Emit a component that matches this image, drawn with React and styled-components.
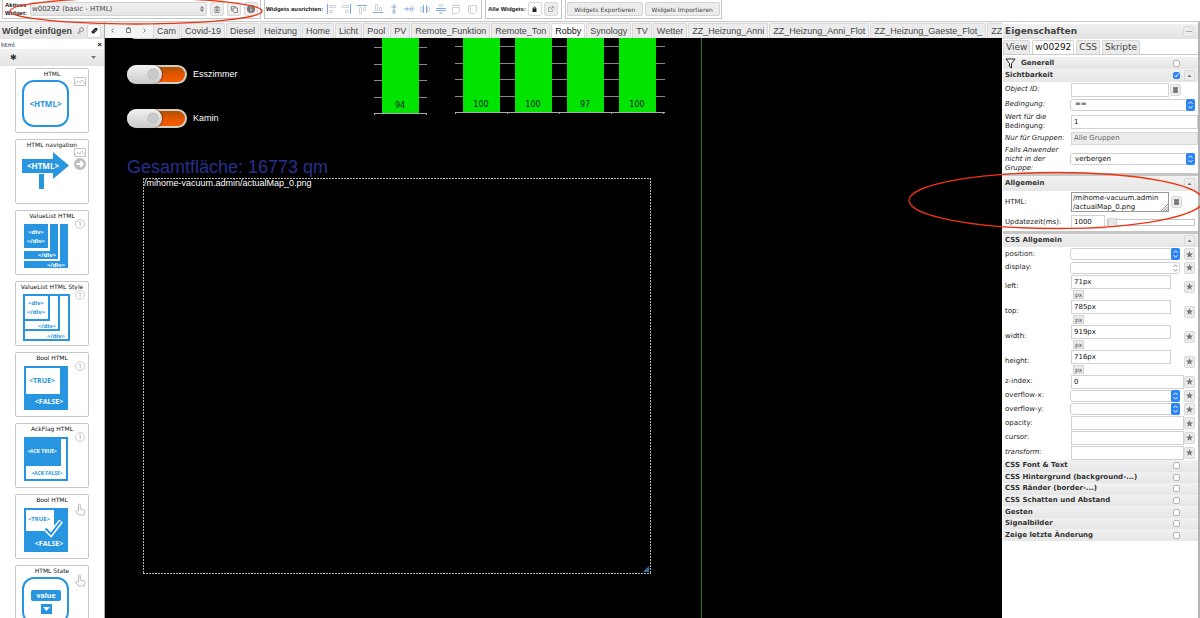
import React from "react";
import styled, { createGlobalStyle, css } from "styled-components";

const Global = createGlobalStyle`
  * { box-sizing: border-box; }
  html, body, #root { height: 100%; }
  body { margin: 0; overflow: hidden; background: #fff; color: #222; font: 7px/9px ${"\"DejaVu Sans\", Verdana, sans-serif"}; }
  button, input, select, textarea { font: inherit; color: inherit; margin: 0; padding: 0; border-radius: 0; }
  h1, h2 { margin: 0; }
`;

const arial = '"Liberation Sans", Arial, sans-serif';
const blue = "#2795e0";

const Shell = styled.div`
  display: grid;
  grid-template-rows: 22px minmax(0, 1fr);
  height: 100vh;
  position: relative;
  overflow: hidden;
`;

/* ---------- top toolbar ---------- */
const Toolbar = styled.header`
  display: flex;
  gap: 3px;
  padding: 0 0 2px 2px;
  background: #fff;
  border-bottom: 1px solid #c9c9c9;
`;
const Group = styled.div`
  display: flex;
  align-items: center;
  border: 1px solid #c4c4c4;
  border-top: 0;
  padding: 0 ${(p) => p.$px || "2px"};
  width: ${(p) => p.$w};
  gap: ${(p) => p.$gap || "0"};
  white-space: nowrap;
`;
const GroupLabel = styled.label`
  font: bold 6px/8px ${arial};
  color: #111;
`;
const ActiveSelect = styled.div`
  position: relative;
  flex: 1;
  height: 14px;
  select {
    appearance: none;
    width: 100%;
    height: 14px;
    padding: 0 1px;
    border: 1px solid #d3d3d3;
    border-radius: 2px;
    background: linear-gradient(#f0f0f0, #e4e4e4);
    color: #444;
  }
  svg { position: absolute; right: 3px; top: 4px; pointer-events: none; }
`;
const IconButton = styled.button`
  display: inline-flex;
  align-items: center;
  justify-content: center;
  flex: none;
  width: ${(p) => p.$w || "14px"};
  height: ${(p) => p.$h || "14px"};
  border: 1px solid ${(p) => (p.$plain ? "transparent" : "#d9d9d9")};
  border-radius: 2px;
  background: ${(p) => (p.$plain ? "transparent" : p.$white ? "#fff" : "#ececec")};
  color: ${(p) => p.$color || "#777"};
`;
const AlignIcons = styled.div`
  display: flex;
  flex: 1;
  justify-content: space-around;
`;
const TextButton = styled.button`
  height: 14px;
  flex: 1;
  border: 1px solid #d3d3d3;
  border-radius: 2px;
  background: #ececec;
  color: #444;
  font-size: 6px;
`;

/* ---------- body ---------- */
const Body = styled.div`
  display: grid;
  grid-template-columns: 105px minmax(0, 1fr) 198px;
  min-height: 0;
`;

/* ---------- left palette ---------- */
const Palette = styled.aside`
  display: flex;
  flex-direction: column;
  min-height: 0;
  overflow: hidden;
  border-right: 1px solid #aaa;
  background: #fff;
`;
const PaletteHead = styled.div`
  display: flex;
  align-items: center;
  flex: none;
  height: 17px;
  padding: 0 3px 0 2px;
  background: linear-gradient(#f1f1f1, #e4e4e4);
  h2 { flex: 1; font: bold 9px/16px ${arial}; color: #444; white-space: nowrap; }
`;
const SearchRow = styled.div`
  display: flex;
  flex: none;
  height: 10px;
  padding: 0 1px;
  input { flex: 1; min-width: 0; height: 10px; border: 0; outline: 0; font-size: 6px; color: #115; background: transparent; }
  button { border: 0; background: none; font: bold 8px/9px ${arial}; color: #111; padding: 0 1px; }
`;
const SetSelect = styled.div`
  position: relative;
  flex: none;
  height: 18px;
  select {
    appearance: none;
    width: 100%;
    height: 17px;
    padding-left: 10px;
    border: 0;
    background: linear-gradient(#f1f1f1, #e4e4e4);
    font-size: 8px;
    color: #333;
  }
  svg { position: absolute; right: 8px; top: 7px; pointer-events: none; }
`;
const Cards = styled.div`
  display: flex;
  flex-direction: column;
  gap: 6px;
  padding: 1px 15px 0;
`;
const Card = styled.div`
  position: relative;
  flex: none;
  height: 65px;
  padding: 0 6px;
  border: 1px solid #c8c8c8;
  border-radius: 2px;
  color: #111;
  font-size: 6px;
  line-height: 10px;
  text-align: center;
  white-space: nowrap;
  > svg { display: block; margin-top: 1px; }
`;
const Badge = styled.span`
  position: absolute;
  top: 8px;
  right: 2px;
  display: grid;
  gap: 1px;
`;
const CardTitle = styled.div`
  margin: 0 -6px;
`;

/* ---------- centre ---------- */
const Center = styled.main`
  display: flex;
  flex-direction: column;
  min-width: 0;
  min-height: 0;
`;
const ViewTabs = styled.nav`
  display: flex;
  flex: none;
  gap: 1px;
  height: 16px;
  padding: 1px 0 0;
  background: #f4f4f4;
  overflow: hidden;
`;
const ViewTab = styled.button`
  flex: none;
  height: 15px;
  padding: 0 3px;
  border: 1px solid #d9d9d9;
  border-bottom: 0;
  border-radius: 2px 2px 0 0;
  background: ${(p) => (p.$on ? "#fff" : "#ebebeb")};
  color: ${(p) => (p.$on ? "#111" : "#484848")};
  font: 9px/14px ${arial};
  white-space: nowrap;
`;
const TabTools = styled.div`
  display: flex;
  flex: none;
  justify-content: space-around;
  width: 47px;
`;
const Canvas = styled.div`
  position: relative;
  flex: 1;
  min-height: 0;
  background: #000;
  overflow: hidden;
  font-family: ${arial};
`;
const Placed = styled.div`
  position: absolute;
  left: ${(p) => p.$x}px;
  top: ${(p) => p.$y}px;
`;
const Switch = styled.label`
  display: flex;
  align-items: center;
  gap: 6px;
  color: #fff;
  font-size: 9px;
  line-height: 20px;
  input {
    appearance: none;
    width: 60px;
    height: 19px;
    border-radius: 10px;
    border: 2px solid #d2cec6;
    background: linear-gradient(#a85400, #e65500 50%, #f06000);
    position: relative;
  }
  input::before {
    content: "";
    position: absolute;
    left: -2px;
    top: -2px;
    width: 35px;
    height: 19px;
    border-radius: 10px;
    background:
      radial-gradient(circle at 26px 9px, #cbcbcb 0 4px, #bdbdbd 5px, transparent 6px),
      linear-gradient(#f2f2f2, #c9c9c9);
    box-shadow: 1px 0 1px #733;
  }
`;
const AreaText = styled(Placed)`
  color: #26308f;
  font-size: 18px;
  line-height: 20px;
  white-space: nowrap;
`;
const dashes = (dir) => `repeating-linear-gradient(${dir}, #b8b8b8 0 2px, transparent 2px 3px)`;
const MapWidget = styled(Placed)`
  width: 508px;
  height: 396px;
  padding: 1px;
  background:
    ${dashes("90deg")} top / 100% 1px no-repeat,
    ${dashes("90deg")} bottom / 100% 1px no-repeat,
    ${dashes("180deg")} left / 1px 100% no-repeat,
    ${dashes("180deg")} right / 1px 100% no-repeat;
  color: #fff;
  font-size: 9px;
  line-height: 9px;
  svg { position: absolute; right: 2px; bottom: 2px; }
`;
const Guide = styled(Placed)`
  width: 1px;
  height: 100%;
  background: #2a7a2a;
`;

/* ---------- right inspector ---------- */
const Inspector = styled.aside`
  display: flex;
  flex-direction: column;
  min-width: 0;
  overflow: hidden;
  padding: 2px 0 0 1px;
  border-right: 2px solid #b4b4b4;
  background: #fff;
`;
const PanelHead = styled.div`
  display: flex;
  align-items: center;
  justify-content: space-between;
  flex: none;
  height: 15px;
  padding: 0 4px 0 2px;
  background: linear-gradient(#f1f1f1, #e2e2e2);
  h1 { font-size: 9px; line-height: 15px; color: #444; }
`;
const PanelTabs = styled.nav`
  display: flex;
  flex: none;
  gap: 2px;
  height: 16px;
  padding: 1px 0 0;
  border-bottom: 1px solid #ccc;
`;
const PanelTab = styled.button`
  height: 14px;
  padding: 0 2px;
  border: 1px solid #d6d6d6;
  border-bottom: 0;
  border-radius: 2px 2px 0 0;
  background: ${(p) => (p.$on ? "#fff" : "#ebebeb")};
  color: ${(p) => (p.$on ? "#111" : "#444")};
  font-size: 9px;
  line-height: 13px;
`;
const Section = styled.div`
  display: flex;
  align-items: center;
  flex: none;
  height: ${(p) => p.$h || "12px"};
  margin-top: ${(p) => p.$mt || "0"};
  padding: 0 3px 0 2px;
  background: linear-gradient(#f1f1f1, #e6e6e6);
  ${(p) => p.$bar && css`border-top: 3px solid #c6c6c6;`}
  color: #333;
  h2, label { flex: 1; font-size: 7px; line-height: 11px; font-weight: bold; white-space: nowrap; }
  > svg { margin-right: 5px; }
`;
const ToggleSlot = styled.span`
  display: flex;
  width: 11px;
  margin-left: 4px;
`;
const Check = styled.input`
  appearance: none;
  width: 7px;
  height: 7px;
  border: 1px solid #b5b5b5;
  border-radius: 2px;
  background: #fff;
  &:checked { border-color: #2b83f6; background: #2b83f6; }
`;
const CheckWrap = styled.span`
  position: relative;
  display: inline-flex;
  svg { position: absolute; inset: 0; pointer-events: none; }
`;
const Row = styled.div`
  display: grid;
  grid-template-columns: 66px minmax(0, 1fr);
  align-items: center;
  flex: none;
  height: ${(p) => p.$h};
  padding-left: 2px;
  label { ${(p) => p.$i && "font-style: italic;"} }
`;
const Cell = styled.div`
  display: flex;
  align-items: center;
  gap: ${(p) => p.$gap || "2px"};
  padding-right: ${(p) => p.$pr || "3px"};
`;
const Field = styled.input`
  flex: ${(p) => (p.$w ? "none" : "1")};
  width: ${(p) => p.$w || "auto"};
  min-width: 0;
  height: 14px;
  padding: 0 2px;
  border: 1px solid #d2d2d2;
  border-radius: 0;
  outline: 0;
  background: #fff;
  color: #111;
`;
const GroupsButton = styled.button`
  flex: 1;
  height: 13px;
  padding: 0 2px;
  text-align: left;
  border: 1px solid #d8d8d8;
  background: #ececec;
  color: #666;
`;
const Html = styled.textarea`
  width: 98px;
  height: 20px;
  padding: 1px;
  border: 1px solid #999;
  outline: 0;
  resize: none;
  overflow: hidden;
  line-height: 9px;
  color: #111;
`;
const HtmlWrap = styled.div`
  position: relative;
  display: flex;
  svg { position: absolute; right: 1px; bottom: 1px; pointer-events: none; }
`;
const SelectBox = styled.div`
  position: relative;
  flex: ${(p) => (p.$w ? "none" : "1")};
  width: ${(p) => p.$w || "auto"};
  height: 12px;
  margin-left: -1px;
  select {
    appearance: none;
    width: 100%;
    height: 12px;
    padding: 0 4px;
    border: 1px solid #cfcfcf;
    border-radius: 3px;
    background: #fff;
    color: #111;
  }
  svg { position: absolute; right: 0; top: 0; pointer-events: none; }
`;
const Stack = styled.div`
  display: flex;
  flex: 1;
  flex-direction: column;
  align-items: flex-start;
  gap: 1px;
`;
const Unit = styled.button`
  height: 9px;
  margin-left: 2px;
  padding: 0 1px;
  border: 1px solid #d3d3d3;
  background: #ececec;
  color: #444;
  font-size: 6px;
  line-height: 7px;
`;
const Slider = styled.input`
  appearance: none;
  flex: 1;
  min-width: 0;
  height: 7px;
  border: 1px solid #c4c4c4;
  background: #fff;
  &::-webkit-slider-thumb { appearance: none; width: 9px; height: 9px; border: 1px solid #d3d3d3; background: #e6e6e6; }
`;
const Closed = styled.div`
  display: grid;
  grid-auto-rows: minmax(0, 1fr);
  flex: none;
  height: 81px;
`;
const Marks = styled.svg`
  position: absolute;
  left: 0;
  top: 0;
  pointer-events: none;
`;

/* ---------- small drawings ---------- */
const Star = () => (
  <svg width="7" height="7" viewBox="0 0 14 14"><path fill="#777" d="M7 0l2 5h5l-4 3.3 1.600 5.200L7 10.400l-4.600 3.100L4 8.300 0 5h5z" /></svg>
);
const StarButton = ({ name }) => <IconButton $w="11px" $h="12px" aria-label={`${name} Favorit`}><Star /></IconButton>;
const UpDown = ({ gray }) => (
  <svg width="9" height="12" viewBox="0 0 9 12">
    {!gray && <rect width="9" height="12" rx="2" fill="#2b83f6" />}
    <path d="M2.500 4.800l2-2 2 2M2.500 7.200l2 2 2-2" fill="none" stroke={gray ? "#888" : "#fff"} strokeWidth="1" />
  </svg>
);
const Caret = ({ up }) => (
  <svg width="5" height="3" viewBox="0 0 10 6"><path fill="#777" d={up ? "M1 6l4-5 4 5z" : "M0 0l5 6 5-6z"} /></svg>
);
const Trash = () => (
  <svg width="6" height="7" viewBox="0 0 12 14"><path d="M1 3h10M4 3V1h4v2M2 3v10h8V3M5 5v6M7 5v6" fill="none" stroke="#777" strokeWidth="1.500" /></svg>
);
const Menu = () => (
  <svg width="5" height="6" viewBox="0 0 5 6"><rect width="5" height="6" fill="#888" /><path d="M1 1.500h3M1 3h3M1 4.500h3" stroke="#666" strokeWidth=".6" /></svg>
);
const Copy = () => (
  <svg width="7" height="7" viewBox="0 0 14 14"><path d="M1 1h8v3M1 1v8h3M4 4h9v9H6L4 11z" fill="none" stroke="#777" strokeWidth="1.600" /></svg>
);

/* each entry: blue guide line, grey box outlines */
const alignShapes = [
  ["M1.500 0v10", "M3.500 1.500h6v2h-6zM3.500 6.500h3v2h-3z"],
  ["M8.500 0v10", "M.5 1.500h6v2h-6zM3.500 6.500h3v2h-3z"],
  ["M0 1.500h10", "M2.500 3.500h2v6h-2zM6.500 3.500h2v3h-2z"],
  ["M0 8.500h10", "M2.500 .5h2v6h-2zM6.500 3.500h2v3h-2z"],
  ["M5 0v10", "M2.500 2.500h5v1h-5zM3.500 6.500h3v2h-3z"],
  ["M0 5h10", "M2.500 3.500h1v3h-1zM6.500 2.500h2v5h-2z"],
  ["M3.500 1v8M6.500 1v8", "M.5 3.500h2v4h-2zM7.500 3.500h2v4h-2z"],
  ["M0 4.500h10M0 6.500h10", "M3.500 .5h3v2h-3zM3.500 8.500h3v1h-3z"],
  ["M1 1.500h8", "M1.500 3.500h7v4l-2 2h-5z"],
  ["M1.500 1v8", "M3.500 1.500h6v6l-2 2h-4z"],
];
const alignNames = ["links", "rechts", "oben", "unten", "vertikal mittig", "horizontal mittig", "horizontal verteilen", "vertikal verteilen", "gleiche Breite", "gleiche Höhe"];

const T = ({ x, y, s = 6, f = blue, children }) => (
  <text x={x} y={y} fontSize={s} fill={f} fontWeight="bold" textAnchor="middle" fontFamily="'Open Sans', sans-serif">{children}</text>
);
const art = {
  html: (<><rect x="1" y="1" width="45" height="45" rx="11" fill="#fff" stroke={blue} strokeWidth="2" /><T x="23.500" y="27" s={8}>&lt;HTML&gt;</T></>),
  nav: (<><path fill={blue} d="M0 8h31V1l16 13.500L31 28v-6H0zM17 23h5v15h-5z" /><T x="21" y="18" s={8} f="#fff">&lt;HTML&gt;</T></>),
  list: (<><path fill={blue} d="M2 2h24v24H2zM28 2h8v35H2v-8h26zM38 2h8v44H2v-7h36z" /><T x="14" y="12" f="#fff">&lt;div&gt;</T><T x="14" y="21" f="#fff">&lt;/div&gt;</T><T x="25" y="35" f="#fff">&lt;/div&gt;</T><T x="34" y="45" f="#fff">&lt;/div&gt;</T></>),
  style: (<><path fill="#fff" stroke={blue} strokeWidth="2" d="M2 2h45v45H2zM2 37h35V2M2 27h25V2" /><T x="14" y="12">&lt;div&gt;</T><T x="14" y="21">&lt;/div&gt;</T><T x="25" y="35">&lt;/div&gt;</T><T x="34" y="45">&lt;/div&gt;</T></>),
  bool: (<><rect x="2" y="2" width="44" height="44" fill={blue} /><rect x="4" y="4" width="34" height="26" fill="#fff" /><T x="20" y="19" s={7}>&lt;TRUE&gt;</T><T x="27" y="40" s={7} f="#fff">&lt;FALSE&gt;</T></>),
  ack: (<><rect x="2" y="2" width="44" height="44" fill={blue} /><path fill="#fff" d="M39 4h5v40H4V31h35z" /><T x="20" y="18" s={5} f="#fff">&lt;ACK TRUE&gt;</T><T x="25" y="40" s={5}>&lt;ACK FALSE&gt;</T></>),
  check: (<><rect x="2" y="2" width="44" height="44" fill={blue} /><rect x="4" y="4" width="28" height="21" fill="#fff" /><path d="M23 22l6 6 10-13" fill="none" stroke="#fff" strokeWidth="5" /><path d="M23.500 22.500l5.500 5.500 9.500-12.500" fill="none" stroke={blue} strokeWidth="2" /><T x="17" y="15" s={6}>&lt;TRUE&gt;</T><T x="27" y="40" s={7} f="#fff">&lt;FALSE&gt;</T></>),
  state: (<><rect x="1" y="1" width="45" height="45" rx="11" fill="#fff" stroke={blue} strokeWidth="2" /><rect x="9" y="13" width="30" height="11" rx="2" fill={blue} /><T x="24" y="21" s={7} f="#fff">value</T><rect x="19" y="27" width="11" height="10" fill={blue} /><path fill="#fff" d="M21 30h7l-3.500 4z" /></>),
};
const badgeArt = {
  image: <svg key="i" width="12" height="9" viewBox="0 0 12 9"><path d="M.5.5h11v8H.5zM1 7l3-3 2 2 2-3 3 4" fill="none" stroke="#c4c4c4" /></svg>,
  arrow: <svg key="a" width="12" height="12" viewBox="0 0 12 12"><circle cx="6" cy="6" r="6" fill="#bdbdbd" /><path d="M2.500 6h6M6 3l3 3-3 3" stroke="#fff" strokeWidth="1.800" fill="none" /></svg>,
  one: <svg key="o" width="12" height="10" viewBox="0 1 12 10"><circle cx="6" cy="6" r="4.500" fill="#fff" stroke="#ccc" /><path d="M5 4.500l1.200-.8V8.500" stroke="#bbb" fill="none" /></svg>,
  hand: <svg key="h" width="12" height="13" viewBox="0 0 12 13"><path d="M4.500 8V1.500q1-1 1.800 0V6l4 1q.8.300.6 1.500L10 12H5L1.500 8.500Q2 7 4.500 8zM8 7v-1" fill="#fff" stroke="#bbb" /></svg>,
};
const cards = [
  ["HTML", "html", ["image"]],
  ["HTML navigation", "nav", ["image", "arrow"]],
  ["ValueList HTML", "list", ["one"]],
  ["ValueList HTML Style", "style", ["one"]],
  ["Bool HTML", "bool", ["one"]],
  ["AckFlag HTML", "ack", ["one"]],
  ["Bool HTML", "check", ["hand"]],
  ["HTML State", "state", ["hand"]],
];
const views = ["Cam", "Covid-19", "Diesel", "Heizung", "Home", "Licht", "Pool", "PV", "Remote_Funktion", "Remote_Ton", "Robby", "Synology", "TV", "Wetter", "ZZ_Heizung_Anni", "ZZ_Heizung_Anni_Flot", "ZZ_Heizung_Gaeste_Flot_", "ZZ"];

function BarChart({ values, pitch, width, base }) {
  const lines = [1, 2, 3, 4].map((n) => Math.round(base - n * 16.500));
  return (
    <svg width={width} height={base + 3} shapeRendering="crispEdges">
      {lines.map((y) => <rect key={y} x="0" y={y} width={width} height="1" fill="#888" />)}
      <rect x="0" y={base} width={width} height="1" fill="#aaa" />
      {[...values, 0].map((_, i) => <rect key={i} x={Math.min(i * pitch, width - 1)} y={base} width="1" height="2" fill="#aaa" />)}
      {values.map((v, i) => (
        <g key={i}>
          <rect x={8 + i * pitch} y="0" width="37" height={base} fill="#00e400" />
          <text x={26 + i * pitch} y={base - 5} fontSize="8" textAnchor="middle" fill="#022" fontFamily="DejaVu Sans, sans-serif">{v}</text>
        </g>
      ))}
    </svg>
  );
}

const Toggle = () => <IconButton $w="11px" $h="11px" aria-label="Zuklappen"><Caret up /></IconButton>;

function SizeRow({ name, value }) {
  return (
    <Row $h="25px">
      <label htmlFor={name}>{name}:</label>
      <Cell>
        <Stack><Field id={name} $w="100px" defaultValue={value} /><Unit>px</Unit></Stack>
        <StarButton name={name} />
      </Cell>
    </Row>
  );
}
const SpacedCell = styled(Cell)`
  justify-content: space-between;
`;
function PickRow({ name, gray, h = "14px" }) {
  return (
    <Row $h={h}>
      <label htmlFor={name}>{name}:</label>
      <SpacedCell>
        <SelectBox $w="110px"><select id={name} /><UpDown gray={gray} /></SelectBox>
        <StarButton name={name} />
      </SpacedCell>
    </Row>
  );
}
function TextRow({ name, value = "", italic, h = "15px" }) {
  return (
    <Row $h={h} $i={italic}>
      <label htmlFor={name}>{name}:</label>
      <Cell $gap="0"><Field id={name} defaultValue={value} /><StarButton name={name} /></Cell>
    </Row>
  );
}

export default function App() {
  return (
    <>
      <Global />
      <Shell>
        <Toolbar>
          <Group $w="259px" $gap="3px">
            <GroupLabel htmlFor="active">Aktives<br />Widget:</GroupLabel>
            <ActiveSelect>
              <select id="active"><option>w00292 (basic - HTML)</option></select>
              <svg width="4" height="6" viewBox="0 0 4 6"><path fill="#777" d="M0 2.500L2 0l2 2.500zM0 3.500L2 6l2-2.500z" /></svg>
            </ActiveSelect>
            <IconButton aria-label="Löschen"><Trash /></IconButton>
            <IconButton aria-label="Kopieren"><Copy /></IconButton>
            <IconButton aria-label="Info"><svg width="8" height="8" viewBox="0 0 8 8"><circle cx="4" cy="4" r="4" fill="#777" /><path d="M4 3.500V6.500M4 1.500v1" stroke="#eee" /></svg></IconButton>
          </Group>
          <Group $w="218px" $px="1px">
            <GroupLabel as="span">Widgets ausrichten:</GroupLabel>
            <AlignIcons>
              {alignShapes.map(([line, box], i) => (
                <IconButton key={i} $plain $w="12px" aria-label={alignNames[i]}>
                  <svg width="10" height="10" viewBox="0 0 10 10"><path d={box} fill="#fff" stroke="#d2d2d2" /><path d={line} stroke={i > 7 ? "#b9cdf0" : "#7aa6ee"} fill="none" /></svg>
                </IconButton>
              ))}
            </AlignIcons>
          </Group>
          <Group $w="77px" $gap="2px">
            <GroupLabel as="span">Alle Widgets:</GroupLabel>
            <IconButton $white aria-label="Sperren"><svg width="5" height="6" viewBox="0 0 10 12"><path d="M2.500 6V3.500q2.500-4 5 0V6" fill="none" stroke="#222" strokeWidth="2" /><rect x="1" y="5" width="8" height="7" fill="#222" /></svg></IconButton>
            <IconButton aria-label="Öffnen"><svg width="6" height="6" viewBox="0 0 12 12"><path d="M6 3H1v8h8V7M5 7l6-6M7 1h4v4" fill="none" stroke="#999" strokeWidth="1.500" /></svg></IconButton>
          </Group>
          <Group $w="157px" $px="1px" $gap="2px">
            <TextButton>Widgets Exportieren</TextButton>
            <TextButton>Widgets Importieren</TextButton>
          </Group>
        </Toolbar>

        <Body>
          <Palette>
            <PaletteHead>
              <h2>Widget einfügen</h2>
              <IconButton $plain aria-label="Suchen"><svg width="7" height="7" viewBox="0 0 14 14"><circle cx="9" cy="5" r="4" fill="none" stroke="#777" strokeWidth="1.500" /><path d="M6 8l-5 4h6" fill="none" stroke="#777" strokeWidth="1.500" /></svg></IconButton>
              <IconButton $white aria-label="Filter"><svg width="7" height="7" viewBox="0 0 14 14"><path d="M1 9l7-7h5v4l-7 7H2z" fill="#222" /><path d="M6 9l4-4" stroke="#fff" /></svg></IconButton>
            </PaletteHead>
            <SearchRow>
              <input aria-label="Filter" defaultValue="html" />
              <button aria-label="Filter leeren">×</button>
            </SearchRow>
            <SetSelect>
              <select aria-label="Widget-Set"><option>✱</option></select>
              <Caret />
            </SetSelect>
            <Cards>
              {cards.map(([title, kind, badges], i) => (
                <Card key={i}>
                  <CardTitle>{title}</CardTitle>
                  <svg width="48" height="48" viewBox="0 0 48 48">{art[kind]}</svg>
                  <Badge>{badges.map((b) => badgeArt[b])}</Badge>
                </Card>
              ))}
            </Cards>
          </Palette>

          <Center>
            <ViewTabs>
              <TabTools>
                <IconButton $plain aria-label="Zurück"><svg width="3" height="5" viewBox="0 0 3 5"><path d="M2.500 0.500l-2 2 2 2" fill="none" stroke="#777" /></svg></IconButton>
                <IconButton $plain aria-label="Liste"><svg width="5" height="6" viewBox="0 0 5 6"><path d="M.5 1.500h4v4h-4zM1.500.5h2" fill="none" stroke="#777" /></svg></IconButton>
                <IconButton $plain aria-label="Weiter"><svg width="3" height="5" viewBox="0 0 3 5"><path d="M.5 0.500l2 2-2 2" fill="none" stroke="#777" /></svg></IconButton>
              </TabTools>
              {views.map((v) => <ViewTab key={v} $on={v === "Robby"}>{v}</ViewTab>)}
            </ViewTabs>
            <Canvas>
              <Placed $x={22} $y={-18}><Switch><input type="checkbox" defaultChecked aria-label="Schalter" /></Switch></Placed>
              <Placed $x={22} $y={26}><Switch><input type="checkbox" defaultChecked />Esszimmer</Switch></Placed>
              <Placed $x={22} $y={70}><Switch><input type="checkbox" defaultChecked />Kamin</Switch></Placed>
              <Placed $x={269} $y={0}><BarChart values={[94]} pitch={52} width={53} base={75} /></Placed>
              <Placed $x={350} $y={0}><BarChart values={[100, 100, 97, 100]} pitch={52} width={210} base={74} /></Placed>
              <AreaText $x={22} $y={119}>Gesamtfläche: 16773 qm</AreaText>
              <MapWidget $x={38} $y={140}>
                /mihome-vacuum.admin/actualMap_0.png
                <svg width="6" height="6" viewBox="0 0 6 6"><path d="M0 6l6-6v6z" fill="#3a6ea5" /></svg>
              </MapWidget>
              <Guide $x={596} $y={0} />
            </Canvas>
          </Center>

          <Inspector>
            <PanelHead>
              <h1>Eigenschaften</h1>
              <IconButton $w="11px" $h="11px" aria-label="Minimieren"><svg width="6" height="1"><rect width="6" height="1" fill="#aaa" /></svg></IconButton>
            </PanelHead>
            <PanelTabs>
              {["View", "w00292", "CSS", "Skripte"].map((t) => <PanelTab key={t} $on={t === "w00292"}>{t}</PanelTab>)}
            </PanelTabs>
            <Section $mt="2px">
              <svg width="11" height="11" viewBox="0 0 11 11"><path d="M1 1h9L6.500 5.500V10l-2-1.500v-3z" fill="#fff" stroke="#222" /></svg>
              <label htmlFor="general">Generell</label>
              <Check type="checkbox" id="general" />
              <ToggleSlot />
            </Section>
            <Section $h="13px">
              <label htmlFor="visibility">Sichtbarkeit</label>
              <CheckWrap>
                <Check type="checkbox" id="visibility" defaultChecked />
                <svg width="7" height="7" viewBox="0 0 7 7"><path d="M1.500 3.500l1.500 1.500 2.500-3.500" stroke="#fff" fill="none" /></svg>
              </CheckWrap>
              <ToggleSlot><Toggle /></ToggleSlot>
            </Section>
            <Row $h="15px" $i>
              <label htmlFor="oid">Object ID:</label>
              <Cell $gap="1px"><Field id="oid" $w="98px" /><IconButton $w="11px" $h="12px" aria-label="Objekt wählen"><Menu /></IconButton></Cell>
            </Row>
            <Row $h="15px" $i>
              <label htmlFor="cond">Bedingung:</label>
              <Cell><SelectBox><select id="cond"><option>==</option></select><UpDown /></SelectBox></Cell>
            </Row>
            <Row $h="19px">
              <label htmlFor="val">Wert für die Bedingung:</label>
              <Cell $pr="0"><Field id="val" defaultValue="1" /></Cell>
            </Row>
            <Row $h="14px" $i>
              <label htmlFor="groups">Nur für Gruppen:</label>
              <Cell $pr="0"><GroupsButton id="groups">Alle Gruppen</GroupsButton></Cell>
            </Row>
            <Row $h="28px" $i>
              <label htmlFor="deny">Falls Anwender nicht in der Gruppe:</label>
              <Cell><SelectBox><select id="deny"><option>verbergen</option></select><UpDown /></SelectBox></Cell>
            </Row>

            <Section $bar $h="18px"><h2>Allgemein</h2><Toggle /></Section>
            <Row $h="22px">
              <label htmlFor="html">HTML:</label>
              <Cell>
                <HtmlWrap>
                  <Html id="html" defaultValue={"/mihome-vacuum.admin\n/actualMap_0.png"} />
                  <svg width="7" height="7" viewBox="0 0 7 7"><path d="M0 7l7-7M2.500 7L7 2.500M5 7l2-2" stroke="#888" /></svg>
                </HtmlWrap>
                <IconButton $w="11px" $h="12px" aria-label="HTML bearbeiten"><Menu /></IconButton>
              </Cell>
            </Row>
            <Row $h="18px">
              <label htmlFor="upd">Updatezeit(ms):</label>
              <Cell><Field id="upd" $w="34px" defaultValue="1000" /><Slider type="range" aria-label="Updatezeit" defaultValue="0" /></Cell>
            </Row>

            <Section $bar $h="16px"><h2>CSS Allgemein</h2><Toggle /></Section>
            <PickRow name="position" />
            <PickRow name="display" gray h="13px" />
            <SizeRow name="left" value="71px" />
            <SizeRow name="top" value="785px" />
            <SizeRow name="width" value="919px" />
            <SizeRow name="height" value="716px" />
            <TextRow name="z-index" value="0" />
            <PickRow name="overflow-x" h="13px" />
            <PickRow name="overflow-y" />
            <TextRow name="opacity" h="14px" />
            <TextRow name="cursor" />
            <TextRow name="transform" italic />
            <Closed>
              {["CSS Font & Text", "CSS Hintergrund (background-...)", "CSS Ränder (border-...)", "CSS Schatten und Abstand", "Gesten", "Signalbilder", "Zeige letzte Änderung"].map((s, i) => (
                <Section key={s} $h="auto">
                  <label htmlFor={`sec${i}`}>{s}</label>
                  <Check type="checkbox" id={`sec${i}`} />
                  <ToggleSlot />
                </Section>
              ))}
            </Closed>
          </Inspector>
        </Body>

        <Marks width="1210" height="240" viewBox="0 0 1210 240" aria-hidden="true">
          <ellipse cx="136" cy="11" rx="126" ry="13" fill="none" stroke="#ee3311" strokeWidth="1.300" />
          <ellipse cx="1056" cy="200.500" rx="147" ry="28" fill="none" stroke="#ee3311" strokeWidth="1.300" />
        </Marks>
      </Shell>
    </>
  );
}
